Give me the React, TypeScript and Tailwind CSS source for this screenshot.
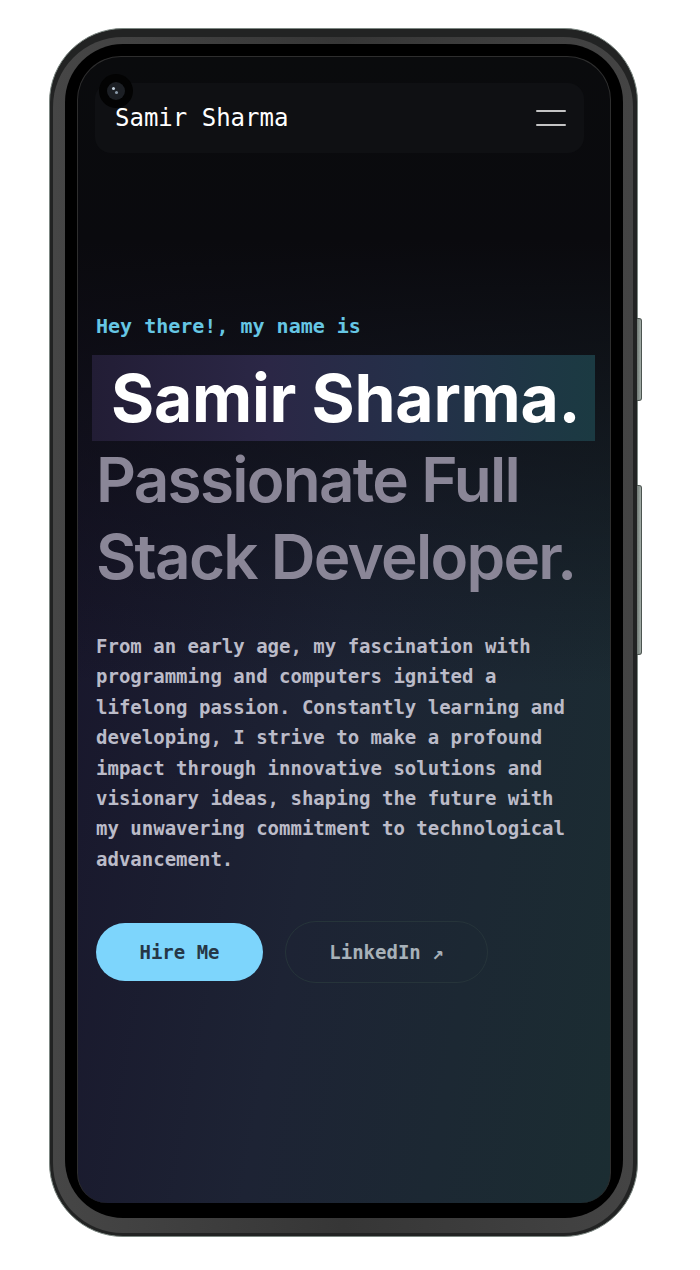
import React from "react";

const mono = "font-['DejaVu_Sans_Mono',monospace]";
const sans = "font-['Inter',sans-serif]";

function Camera() {
  return (
    <div className="absolute left-[21px] top-[17px] flex h-[34px] w-[34px] items-center justify-center rounded-full bg-[#030303]">
      <div className="relative h-[18px] w-[18px] rounded-full bg-[#1c1f24]">
        <span className="absolute left-[5px] top-[5px] h-[3px] w-[3px] rounded-full bg-[#c3d0dc]" />
        <span className="absolute left-[8px] top-[9px] h-[3px] w-[3px] rounded-full bg-[#8a9aa9]" />
      </div>
    </div>
  );
}

function Navbar() {
  return (
    <div className="ml-[17px] mt-[26px] flex h-[70px] w-[489px] items-center justify-between rounded-[16px] bg-[#0f1013] pl-[20px] pr-[18px]">
      <span className={`${mono} text-[24px] leading-none text-white`}>Samir Sharma</span>
      <button className="flex flex-col gap-[12px]" aria-label="menu">
        <span className="h-[2px] w-[30px] rounded-full bg-[#c4c4c4]" />
        <span className="h-[2px] w-[30px] rounded-full bg-[#c4c4c4]" />
      </button>
    </div>
  );
}

function Hero() {
  return (
    <div className="px-[18px] pt-[158px]">
      <p className={`${mono} text-[20px] font-bold leading-[30px] text-[#66c6e4]`}>Hey there!, my name is</p>

      <h1
        className={`${sans} -ml-[4px] mt-[14px] h-[86px] w-[503px] whitespace-nowrap bg-[linear-gradient(90deg,#221d35,#2b2746_35%,#243049_65%,#1b3a42)] pl-[19px] text-[66px] font-bold leading-[86px] tracking-[-0.004em] text-white`}
      >
        Samir Sharma.
      </h1>
      <h2 className={`${sans} text-[62px] font-semibold leading-[77px] tracking-[-0.028em] text-[#8a8697]`}>
        Passionate Full
        <br />
        Stack Developer.
      </h2>

      <p className={`${mono} mt-[36px] w-[474px] text-[19px] font-bold leading-[30.4px] text-[#bbbbc8]`}>
        From an early age, my fascination with programming and computers ignited a lifelong passion. Constantly
        learning and developing, I strive to make a profound impact through innovative solutions and visionary ideas,
        shaping the future with my unwavering commitment to technological advancement.
      </p>

      <div className="mt-[47px] flex items-center gap-[22px]">
        <button
          className={`${mono} -mt-[1px] h-[58px] w-[167px] rounded-full bg-[#7dd5fc] text-[19px] font-bold text-[#263746]`}
        >
          Hire Me
        </button>
        <button
          className={`${mono} h-[62px] w-[203px] rounded-full border border-[#26343a] text-[19px] font-bold text-[#a7b1b9]`}
        >
          LinkedIn ↗
        </button>
      </div>
    </div>
  );
}

export default function App() {
  return (
    <div className="min-h-screen bg-white pl-[49px] pt-[28px]">
      <div className="relative h-[1209px] w-[589px]">
        {/* side keys */}
        <div className="absolute left-[588px] top-[290px] h-[83px] w-[5px] rounded-r-[3px] border border-l-0 border-[#4c5450] bg-[linear-gradient(90deg,#6e7873,#a3ada8)]" />
        <div className="absolute left-[588px] top-[457px] h-[170px] w-[5px] rounded-r-[3px] border border-l-0 border-[#4c5450] bg-[linear-gradient(90deg,#6e7873,#a3ada8)]" />

        <div className="flex h-full rounded-[74px] border border-[#7c8782] bg-[#222323] pb-[3px] pl-[3px] pr-[4px] pt-[8px]">
          <div className="flex min-w-0 flex-1 rounded-[70px] bg-[linear-gradient(90deg,#464646,#363636_50%,#444444)] pb-[15px] pl-[12px] pr-[10px] pt-[7px]">
            <div className="flex min-w-0 flex-1 rounded-[58px] bg-black p-[12px] pb-[15px]">
              <div className="relative min-w-0 flex-1 overflow-hidden rounded-b-[30px] rounded-t-[44px] border border-b-0 border-[#2e2e2e] bg-[linear-gradient(180deg,#0a0b0d_0%,#0a0a0e_16%,rgba(10,10,14,0)_55%),linear-gradient(100deg,#171329_0%,#1d2334_50%,#1b2d32_100%)]">
                <Camera />
                <Navbar />
                <Hero />
              </div>
            </div>
          </div>
        </div>
      </div>
    </div>
  );
}
